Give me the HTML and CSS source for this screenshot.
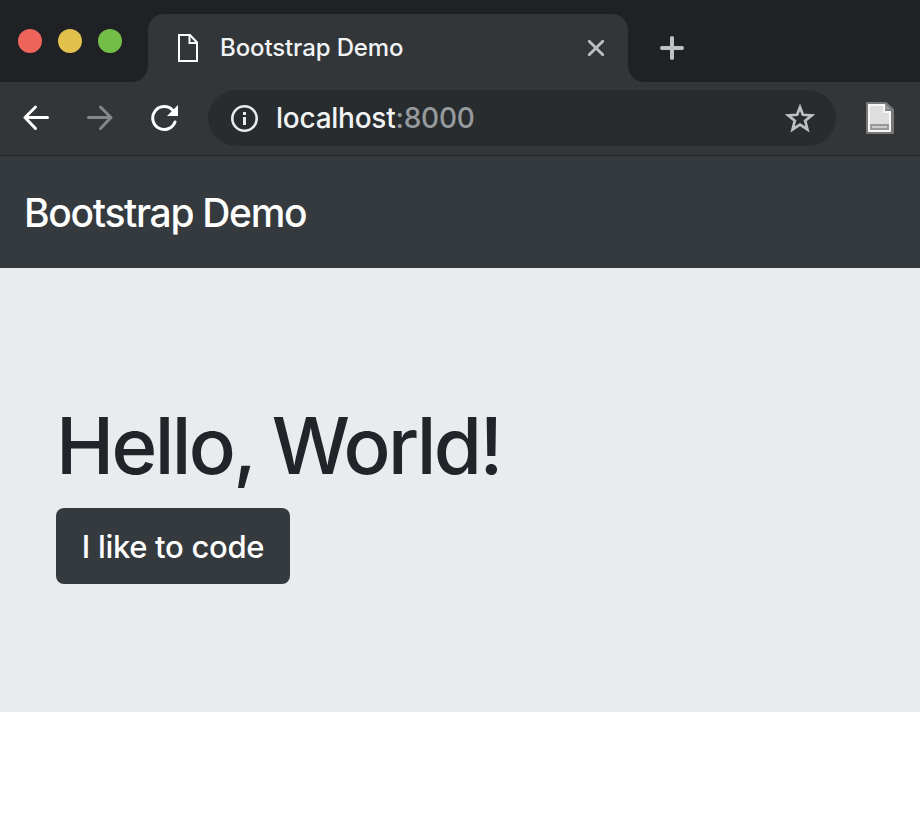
FILE: index.html
```html
<!DOCTYPE html>
<html lang="en">
<head>
<meta charset="utf-8">
<title>Bootstrap Demo</title>
<link rel="stylesheet" href="styles.css">
</head>
<body>
<div class="tabstrip">
  <div class="lights"><i class="light red"></i><i class="light yellow"></i><i class="light green"></i></div>
  <div class="tab">
    <svg class="page-icon" width="20" height="28" viewBox="0 0 20 28" fill="none" stroke="#fff" stroke-width="2"><path d="M1 1h11l7 7.500v18.500H1z"/><path d="M11.500 1v8H19"/></svg>
    <span class="tab-title">Bootstrap Demo</span>
    <svg class="close" width="18" height="18" viewBox="0 0 18 18" stroke="#bdc0c2" stroke-width="2.800" stroke-linecap="round"><path d="M2.200 2.200l13.600 13.600M15.800 2.200L2.200 15.800"/></svg>
  </div>
  <svg class="plus" width="24" height="24" viewBox="0 0 24 24" stroke="#bdc1c6" stroke-width="4" stroke-linecap="round"><path d="M12 2v20M2 12h20"/></svg>
</div>
<div class="toolbar">
  <svg class="back" width="28" height="28" viewBox="0 0 28 28" fill="none" stroke="#fff" stroke-width="3" stroke-linecap="round" stroke-linejoin="round"><path d="M25.500 13.500H3M13.500 3L3 13.500l10.500 11"/></svg>
  <svg class="forward" width="28" height="28" viewBox="0 0 28 28" fill="none" stroke="#85888a" stroke-width="3" stroke-linecap="round" stroke-linejoin="round"><path d="M2.500 13.500H25M14.500 3L25 13.500l-10.500 11"/></svg>
  <svg class="reload" width="28" height="28" viewBox="0 0 28 28" fill="none" stroke="#fff" stroke-width="3"><path d="M22.700 6.200A11.500 11.500 0 1 0 25 18" stroke-linecap="round"/><path d="M28 1v11H17z" fill="#fff" stroke="none"/></svg>
  <div class="address">
    <svg width="28" height="28" viewBox="0 0 28 28" fill="none" stroke="#e8eaed"><circle cx="14.500" cy="14.500" r="12.200" stroke-width="2.600"/><path d="M14.500 13V21M14.500 8v3" stroke-width="3"/></svg>
    <span class="url">localhost<span class="port">:8000</span></span>
    <svg class="star" width="30" height="30" viewBox="0 0 30 30" fill="none" stroke="#bdc1c6" stroke-width="2.700"><path d="M15 4.200l2.900 7.600 8.900.5-6.600 5.400 2.200 8.700L15 21.500l-7.400 4.900 2.200-8.700-6.600-5.400 8.900-.5z"/></svg>
  </div>
  <svg class="extension" width="30" height="34" viewBox="0 0 30 34"><path d="M2 2h19l7 6.500V32H2z" fill="#777877" stroke="#777877" stroke-width="2" stroke-linejoin="round"/><path d="M3 3h17v7h6v21H3z" fill="#f7f7f7"/><path d="M5 5h13v7h6v11H5z" fill="#dedede"/><path d="M20 3v5.500h6z" fill="#999"/><path d="M5 23h19v6H5z" fill="#999"/><path d="M7 25h15v2H7z" fill="#ccc"/></svg>
</div>
<nav class="navbar"><span class="brand">Bootstrap Demo</span></nav>
<main class="hero">
  <h1>Hello, World!</h1>
  <button class="button">I like to code</button>
</main>
</body>
</html>
```
FILE: styles.css
```css
* { box-sizing: border-box; }
body { margin: 0; background: #fff; font-family: Inter, sans-serif; }
svg { flex: none; display: block; }
.tabstrip { height: 82px; background: #202124; display: flex; }
.lights { display: flex; gap: 16px; width: 148px; padding: 29px 0 0 18px; }
.light { width: 24px; height: 24px; border-radius: 50%; }
.red { background: #ed655a; }
.yellow { background: #e1c04c; }
.green { background: #72be47; }
.tab { position: relative; width: 480px; margin-top: 14px; background: #323639; border-radius: 16px 16px 0 0; display: flex; align-items: center; padding: 0 23px 0 30px; }
.tab::before, .tab::after { content: ""; position: absolute; bottom: 0; width: 16px; height: 16px; }
.tab::before { left: -16px; background: radial-gradient(circle at 0 0, transparent 15.500px, #323639 16px); }
.tab::after { right: -16px; background: radial-gradient(circle at 100% 0, transparent 15.500px, #323639 16px); }
.tab-title { margin-left: 22px; padding-bottom: 2px; flex: 1; font-size: 24px; font-weight: 450; color: #f1f3f4; letter-spacing: -0.12px; white-space: nowrap; }
.plus { margin: 36px 0 0 32px; }
.toolbar { height: 74px; background: #323639; border-bottom: 1px solid #242729; display: flex; align-items: center; padding: 0 24px 2px 22px; }
.forward { margin-left: 36px; }
.reload { margin-left: 36px; }
.address { margin-left: 30px; width: 628px; height: 56px; border-radius: 28px; background: #282c2f; display: flex; align-items: center; padding: 0 21px 0 22px; }
.url { margin-left: 18px; flex: 1; font-size: 28px; font-weight: 450; color: #f1f3f4; letter-spacing: -0.25px; white-space: nowrap; }
.port { color: #969a9d; }
.extension { margin-left: 29px; }
.navbar { height: 112px; background: #353a3e; display: flex; align-items: center; padding: 1px 0 0 24px; color: #fff; }
.brand { font-size: 39px; font-weight: 450; letter-spacing: -1.32px; white-space: nowrap; }
.hero { height: 444px; background: #e8ecef; padding: 130px 56px 128px; display: flex; flex-direction: column; align-items: flex-start; }
h1 { margin: 0 0 14px; font-size: 78px; line-height: 96px; font-weight: 540; letter-spacing: -2.6px; color: #212529; white-space: nowrap; }
.button { width: 234px; height: 76px; border: 0; border-radius: 8px; background: #353a3e; color: #fff; font: 450 31px/48px Inter, sans-serif; letter-spacing: -0.3px; padding: 2px 0 0; white-space: nowrap; }
```
